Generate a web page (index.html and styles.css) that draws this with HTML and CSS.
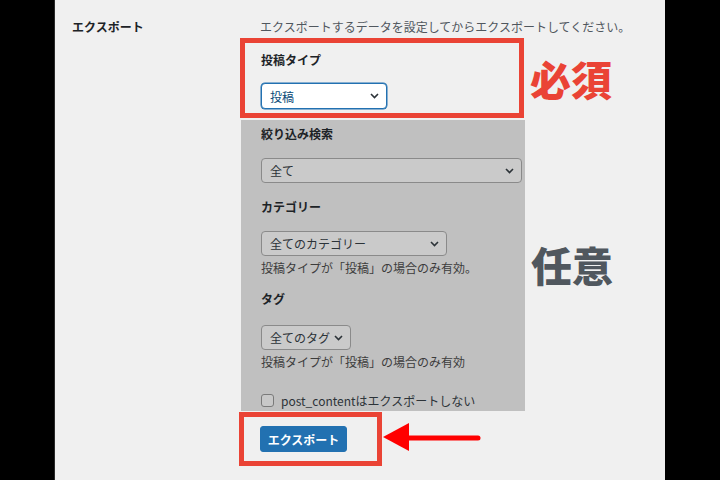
FILE: index.html
```html
<!DOCTYPE html>
<html lang="ja">
<head>
    <meta charset="UTF-8">
    <meta name="viewport" content="width=device-width, initial-scale=1.0">
    <title>エクスポート</title>
    <link rel="stylesheet" href="styles.css">
</head>
<body>
    <div class="page">
        <div class="form-row">
            <div class="row-label">エクスポート</div>
            <div class="field">
                <p class="desc">エクスポートするデータを設定してからエクスポートしてください。</p>

                <div class="group-row">
                    <div class="required-box">
                        <div class="opt-label">投稿タイプ</div>
                        <div class="select select-focus select-type">
                            <span>投稿</span>
                            <svg class="chevron" width="9" height="6" viewBox="0 0 9 6"><path d="M1 1l3.5 3.5L8 1" fill="none" stroke="#2c3338" stroke-width="1.6"/></svg>
                        </div>
                    </div>
                    <div class="note note-red">必須</div>
                </div>

                <div class="group-row">
                    <div class="optional-box">
                        <div class="opt-label">絞り込み検索</div>
                        <div class="select select-wide">
                            <span>全て</span>
                            <svg class="chevron" width="9" height="6" viewBox="0 0 9 6"><path d="M1 1l3.5 3.5L8 1" fill="none" stroke="#2c3338" stroke-width="1.6"/></svg>
                        </div>

                        <div class="opt-label sp-label">カテゴリー</div>
                        <div class="select select-cat">
                            <span>全てのカテゴリー</span>
                            <svg class="chevron" width="9" height="6" viewBox="0 0 9 6"><path d="M1 1l3.5 3.5L8 1" fill="none" stroke="#2c3338" stroke-width="1.6"/></svg>
                        </div>
                        <p class="help">投稿タイプが「投稿」の場合のみ有効。</p>

                        <div class="opt-label tag-label">タグ</div>
                        <div class="select select-tag">
                            <span>全てのタグ</span>
                            <svg class="chevron" width="9" height="6" viewBox="0 0 9 6"><path d="M1 1l3.5 3.5L8 1" fill="none" stroke="#2c3338" stroke-width="1.6"/></svg>
                        </div>
                        <p class="help">投稿タイプが「投稿」の場合のみ有効</p>

                        <label class="check-row">
                            <span class="checkbox"></span>
                            <span>post_contentはエクスポートしない</span>
                        </label>
                    </div>
                    <div class="note note-gray">任意</div>
                </div>

                <div class="group-row">
                    <div class="button-box">
                        <button class="btn-primary">エクスポート</button>
                    </div>
                    <svg class="arrow" width="100" height="32" viewBox="0 0 100 32">
                        <polygon points="1,16 27,2 27,30" fill="#ff0000"/>
                        <line x1="24" y1="17" x2="96" y2="17" stroke="#ff0000" stroke-width="5" stroke-linecap="round"/>
                    </svg>
                </div>
            </div>
        </div>
    </div>
</body>
</html>
```

FILE: styles.css
```css
body {
    margin: 0;
    background-color: #000;
    font-family: "Noto Sans CJK JP", "Noto Sans", sans-serif;
}

.page {
    margin: 0 55px 0 54px;
    border-left: 1px solid #2a2a2a;
    background-color: #f0f0f0;
    height: 480px;
    padding: 18px 0 0 17px;
    box-sizing: border-box;
}

.form-row {
    display: flex;
}

.row-label {
    width: 168px;
    font-size: 12px;
    line-height: 18px;
    font-weight: bold;
    color: #1d2327;
}

.field {
    width: 400px;
}

.desc {
    margin: 0 0 2px 20px;
    font-size: 12px;
    line-height: 18px;
    color: #50575e;
    white-space: nowrap;
}

.group-row {
    display: flex;
    align-items: center;
}

.required-box {
    width: 284px;
    height: 80px;
    box-sizing: border-box;
    border: 5px solid #ea4335;
    padding: 8px 0 0 16px;
}

.optional-box {
    width: 284px;
    margin: 2px 0 0 1px;
    background-color: #c0c0c0;
    padding: 5px 0 2px 20px;
    box-sizing: border-box;
}

.opt-label {
    font-size: 12px;
    line-height: 18px;
    font-weight: bold;
    color: #1d2327;
    margin-bottom: 14px;
}

.optional-box .opt-label {
    margin-bottom: 15px;
}

.sp-label {
    margin-top: 15px;
}

.tag-label {
    margin-top: 13px;
}

.optional-box .tag-label {
    margin-bottom: 17px;
}

.select {
    display: flex;
    align-items: center;
    justify-content: space-between;
    gap: 4px;
    height: 25px;
    box-sizing: border-box;
    border: 1px solid #8a8a8a;
    border-radius: 4px;
    background-color: #cacaca;
    padding: 0 7px 0 8px;
    font-size: 12px;
    color: #2c3338;
    white-space: nowrap;
}

.select-focus {
    height: 26px;
    border-color: #2271b1;
    box-shadow: 0 0 0 0.5px #2271b1;
    background-color: #fff;
    color: #0a4b78;
}

.select-type {
    width: 126px;
}

.select-wide {
    width: 261px;
}

.select-cat {
    width: 186px;
}

.select-tag {
    width: 90px;
}

.chevron {
    flex-shrink: 0;
}

.help {
    margin: 3px 0 0;
    font-size: 12px;
    line-height: 18px;
    color: #3c3c3c;
}

.check-row {
    display: flex;
    align-items: center;
    gap: 7px;
    margin-top: 20px;
    height: 18px;
    font-size: 12px;
    color: #2c3338;
}

.checkbox {
    width: 13px;
    height: 13px;
    box-sizing: border-box;
    border: 1px solid #7a7a7a;
    border-radius: 3px;
    background-color: #c8c8c8;
}

.button-box {
    width: 143px;
    height: 54px;
    box-sizing: border-box;
    margin: 1px 0 0 -1px;
    border: 5px solid #ea4335;
    padding: 9px 0 0 16px;
}

.btn-primary {
    display: block;
    width: 87px;
    height: 26px;
    padding: 0;
    border: 1px solid #2271b1;
    border-radius: 3px;
    background-color: #2271b1;
    color: #fff;
    font-family: inherit;
    font-size: 12px;
    font-weight: bold;
}

.note {
    font-size: 41px;
    font-weight: 900;
    line-height: 1;
    margin-left: 6px;
}

.note-red {
    color: #ea4335;
}

.note-gray {
    color: #50575e;
}

.arrow {
    display: block;
    margin-top: -4px;
}
```
